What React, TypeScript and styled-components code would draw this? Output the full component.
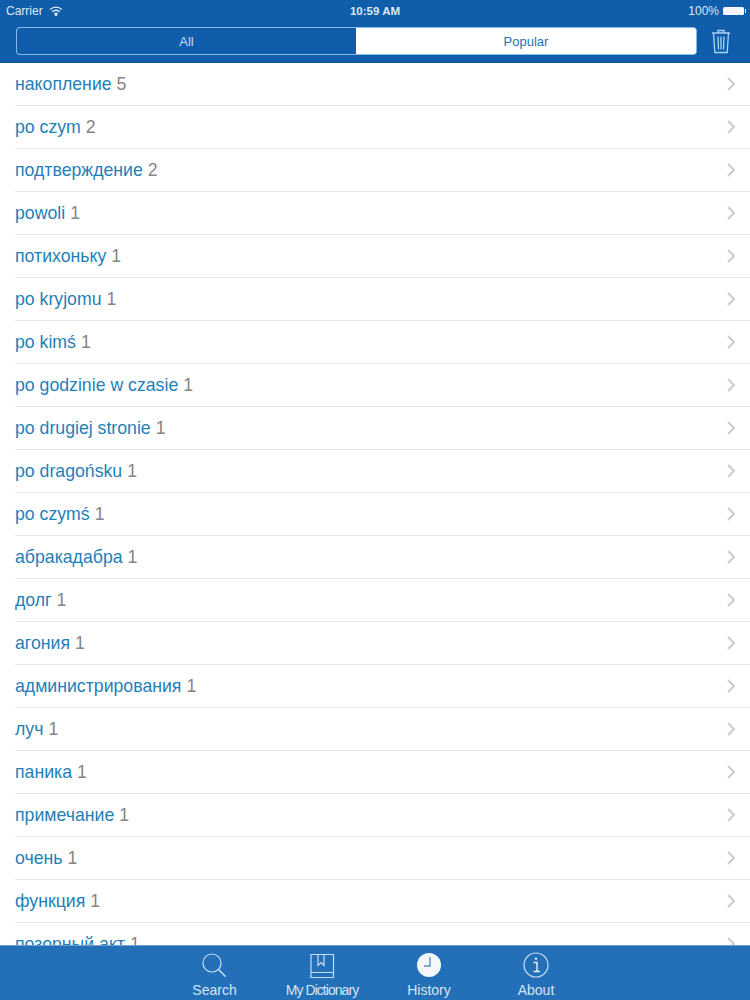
import React from 'react'
import styled, { createGlobalStyle } from 'styled-components'

const GlobalStyle = createGlobalStyle`
  html, body {
    margin: 0;
    padding: 0;
    background: #fff;
    font-family: "Liberation Sans", Arial, sans-serif;
  }
`

const historyItems: [string, number][] = [
  ['накопление', 5],
  ['po czym', 2],
  ['подтверждение', 2],
  ['powoli', 1],
  ['потихоньку', 1],
  ['po kryjomu', 1],
  ['po kimś', 1],
  ['po godzinie w czasie', 1],
  ['po drugiej stronie', 1],
  ['po dragońsku', 1],
  ['po czymś', 1],
  ['абракадабра', 1],
  ['долг', 1],
  ['агония', 1],
  ['администрирования', 1],
  ['луч', 1],
  ['паника', 1],
  ['примечание', 1],
  ['очень', 1],
  ['функция', 1],
  ['позорный акт', 1],
]

const Page = styled.div`
  width: 750px;
  height: 1000px;
  display: flex;
  flex-direction: column;
  overflow: hidden;
`

const Header = styled.header`
  flex: none;
  height: 63px;
  box-sizing: border-box;
  background: #0f5dab;
  border-bottom: 1px solid #0c5299;
`

const StatusBar = styled.div`
  height: 21px;
  padding: 0 6px;
  display: grid;
  grid-template-columns: 1fr auto 1fr;
  align-items: center;
  color: #dce9f6;
  font-size: 12px;
`

const StatusLeft = styled.div`
  display: flex;
  align-items: center;
  gap: 6px;
`

const Clock = styled.div`
  font-weight: 700;
  font-size: 11.5px;
`

const StatusRight = styled.div`
  display: flex;
  align-items: center;
  justify-content: flex-end;
  gap: 4px;
`

const Battery = styled.div`
  position: relative;
  width: 21px;
  height: 8px;
  background: #f3f7fb;
  border-radius: 1.5px;

  &::after {
    content: '';
    position: absolute;
    right: -2px;
    top: 2px;
    width: 1px;
    height: 4px;
    background: #dce9f6;
  }
`

const Toolbar = styled.div`
  display: flex;
  align-items: center;
  padding: 6px 19px 0 16px;
  gap: 14px;
`

const Segments = styled.div`
  flex: 1;
  height: 28px;
  display: flex;
  box-sizing: border-box;
  border: 1px solid #86bce8;
  border-radius: 4px;
  overflow: hidden;
  background: #fff;
`

const Segment = styled.div<{ $active?: boolean }>`
  flex: none;
  width: ${(p) => (p.$active ? '339px' : 'auto')};
  flex-grow: ${(p) => (p.$active ? 0 : 1)};
  display: flex;
  align-items: center;
  justify-content: center;
  font-size: 13px;
  background: ${(p) => (p.$active ? '#0f5dab' : '#fff')};
  color: ${(p) => (p.$active ? '#c3dcf1' : '#2a72b0')};
`

const List = styled.div`
  flex: 1;
  min-height: 0;
  overflow: hidden;
`

const Row = styled.div`
  height: 43px;
  box-sizing: border-box;
  margin-left: 15px;
  padding-right: 14px;
  border-bottom: 1px solid #e8e8e8;
  display: flex;
  align-items: center;
  justify-content: space-between;
  font-size: 17.7px;
  white-space: nowrap;
`

const Term = styled.span`
  color: #1f7fb8;
`

const Count = styled.span`
  color: #858585;
  margin-left: 5px;
`

const TabBar = styled.nav`
  flex: none;
  height: 55px;
  box-sizing: border-box;
  background: #2470b8;
  border-top: 1px solid #6f9fd0;
  display: flex;
  justify-content: center;
`

const Tab = styled.div<{ $width: number; $tight?: boolean }>`
  width: ${(p) => p.$width}px;
  display: flex;
  flex-direction: column;
  align-items: center;
  padding-top: 6px;
  color: #d5e5f4;
  font-size: 14px;
  letter-spacing: ${(p) => (p.$tight ? '-0.95px' : '0')};
  white-space: nowrap;
`

const TabIcon = styled.svg`
  width: 28px;
  height: 28px;
  display: block;
  margin-bottom: 2px;
`

const TrashIcon = () => (
  <svg width="20" height="26" viewBox="0 0 20 26" fill="none" stroke="#a9d3f2" strokeWidth="1.3">
    <path d="M1 5h18M7 5V2.5h6V5M2.5 5l1.3 19.5h12.4L17.5 5" />
    <path d="M7 8.5l.5 13M10 8.5v13M13 8.5l-.5 13" />
  </svg>
)

const WifiIcon = () => (
  <svg width="14" height="10" viewBox="0 0 14 10" fill="none" stroke="#e4eef8" strokeWidth="1.3">
    <path d="M1 3.6a8.6 8.6 0 0 1 12 0M3.2 5.8a5.4 5.4 0 0 1 7.6 0M5.3 7.8a2.4 2.4 0 0 1 3.4 0" />
    <circle cx="7" cy="9" r=".6" fill="#e4eef8" />
  </svg>
)

const Chevron = () => (
  <svg width="9" height="14" viewBox="0 0 9 14" fill="none" stroke="#cbcbcf" strokeWidth="2">
    <path d="M1 1l6 6-6 6" />
  </svg>
)

export default function App() {
  return (
    <Page>
      <GlobalStyle />
      <Header>
        <StatusBar>
          <StatusLeft>
            Carrier
            <WifiIcon />
          </StatusLeft>
          <Clock>10:59 AM</Clock>
          <StatusRight>
            100%
            <Battery />
          </StatusRight>
        </StatusBar>
        <Toolbar>
          <Segments>
            <Segment $active>All</Segment>
            <Segment>Popular</Segment>
          </Segments>
          <TrashIcon />
        </Toolbar>
      </Header>
      <List>
        {historyItems.map(([term, count]) => (
          <Row key={term}>
            <div>
              <Term>{term}</Term>
              <Count>{count}</Count>
            </div>
            <Chevron />
          </Row>
        ))}
      </List>
      <TabBar>
        <Tab $width={108}>
          <TabIcon viewBox="0 0 28 28" fill="none" stroke="#c5ddf2" strokeWidth="1.2">
            <circle cx="11" cy="11" r="9" />
            <path d="M17.5 17.5l7 7" strokeWidth="1.6" />
          </TabIcon>
          Search
        </Tab>
        <Tab $width={107} $tight>
          <TabIcon viewBox="0 0 28 28" fill="none" stroke="#c5ddf2" strokeWidth="1.2">
            <path d="M3 2.5h22.5v23H3z" />
            <path d="M3 20.5h22.5M10 2.5v11l3-3 3 3v-11" />
          </TabIcon>
          My Dictionary
        </Tab>
        <Tab $width={107}>
          <TabIcon viewBox="0 0 28 28">
            <circle cx="14" cy="13" r="12" fill="#f4f8fc" />
            <path d="M15 5v9H9" fill="none" stroke="#5f8fbf" strokeWidth="1.4" />
          </TabIcon>
          History
        </Tab>
        <Tab $width={107}>
          <TabIcon viewBox="0 0 28 28" fill="none" stroke="#c5ddf2" strokeWidth="1.2">
            <circle cx="14" cy="13" r="12" />
            <circle cx="14" cy="6.8" r="1.2" fill="#e8f1f9" stroke="none" />
            <path d="M11.5 10.5H15v9M11.5 19.5h6.5" stroke="#e8f1f9" strokeWidth="1.4" />
          </TabIcon>
          About
        </Tab>
      </TabBar>
    </Page>
  )
}
